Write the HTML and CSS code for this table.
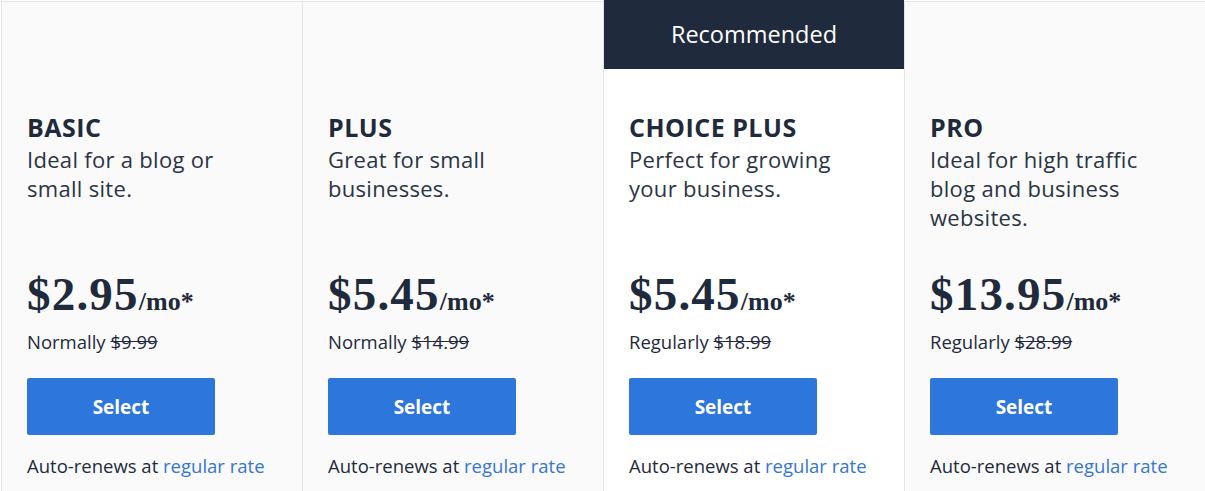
FILE: index.html
```html
<!DOCTYPE html>
<html lang="en">
<head>
<meta charset="utf-8">
<title>Plans</title>
<link rel="stylesheet" href="styles.css">
</head>
<body>
<div class="plans">
  <div class="plan">
    <div class="ribbon"></div>
    <div class="body">
      <h2 class="name">BASIC</h2>
      <p class="desc">Ideal for a blog or small site.</p>
      <div class="price"><span class="amount">$2.95</span><span class="per">/mo*</span></div>
      <p class="normal">Normally <s>$9.99</s></p>
      <a class="select" href="#">Select</a>
      <p class="renew">Auto-renews at <a href="#">regular rate</a></p>
    </div>
  </div>
  <div class="plan">
    <div class="ribbon"></div>
    <div class="body">
      <h2 class="name">PLUS</h2>
      <p class="desc">Great for small businesses.</p>
      <div class="price"><span class="amount">$5.45</span><span class="per">/mo*</span></div>
      <p class="normal">Normally <s>$14.99</s></p>
      <a class="select" href="#">Select</a>
      <p class="renew">Auto-renews at <a href="#">regular rate</a></p>
    </div>
  </div>
  <div class="plan featured">
    <div class="ribbon">Recommended</div>
    <div class="body">
      <h2 class="name">CHOICE PLUS</h2>
      <p class="desc">Perfect for growing your business.</p>
      <div class="price"><span class="amount">$5.45</span><span class="per">/mo*</span></div>
      <p class="normal">Regularly <s>$18.99</s></p>
      <a class="select" href="#">Select</a>
      <p class="renew">Auto-renews at <a href="#">regular rate</a></p>
    </div>
  </div>
  <div class="plan">
    <div class="ribbon"></div>
    <div class="body">
      <h2 class="name">PRO</h2>
      <p class="desc">Ideal for high traffic blog and business websites.</p>
      <div class="price"><span class="amount">$13.95</span><span class="per">/mo*</span></div>
      <p class="normal">Regularly <s>$28.99</s></p>
      <a class="select" href="#">Select</a>
      <p class="renew">Auto-renews at <a href="#">regular rate</a></p>
    </div>
  </div>
</div>
</body>
</html>
```
FILE: styles.css
```css
html, body {
  margin: 0;
  padding: 0;
  background: #ffffff;
}
body {
  font-family: "Open Sans", "Noto Sans", sans-serif;
  color: #1f2a3c;
  overflow: hidden;
}
.plans {
  display: flex;
  padding: 1px 0 0 1px;
  height: 490px;
}
.plan {
  width: 301px;
  flex: none;
  box-sizing: border-box;
  border-left: 1px solid #e4e4e4;
  border-top: 1px solid #e4e4e4;
  background: #fafafa;
  display: flex;
  flex-direction: column;
}
.plan:last-child {
  width: 302px;
}
.plan.featured {
  margin-top: -1px;
  border-top: none;
  background: #ffffff;
}
.ribbon {
  height: 67px;
  flex: none;
  display: flex;
  align-items: center;
  justify-content: center;
  font-size: 23.5px;
  color: #ffffff;
}
.featured .ribbon {
  height: 69px;
  background: #1f2a3c;
  padding-bottom: 2px;
  box-sizing: border-box;
}
.body {
  padding: 0 25px;
}
.name {
  margin: 42px 0 0;
  font-size: 25px;
  line-height: 32px;
  font-weight: 700;
  letter-spacing: 0.5px;
  color: #1f2a3c;
}
.desc {
  margin: 2px 0 0;
  font-size: 22px;
  line-height: 29px;
  letter-spacing: 0.3px;
  color: #2b3444;
  height: 87px;
  max-width: 240px;
}
.price {
  margin-top: 37px;
  font-family: "Liberation Serif", "Times New Roman", serif;
  font-weight: 700;
  color: #1f2a3c;
  line-height: 50px;
  white-space: nowrap;
}
.amount {
  font-size: 47px;
  letter-spacing: 1.2px;
}
.per {
  font-size: 26px;
}
.normal {
  margin: 1px 0 0;
  font-size: 18.5px;
  line-height: 22px;
  color: #1f2a3c;
}
.normal s {
  color: #1f2a3c;
}
.select {
  display: flex;
  align-items: center;
  justify-content: center;
  margin-top: 25px;
  width: 188px;
  height: 57px;
  background: #2d76db;
  color: #ffffff;
  border-radius: 2px;
  font-size: 19px;
  font-weight: 700;
  text-decoration: none;
}
.renew {
  margin: 19px 0 0;
  font-size: 18.5px;
  line-height: 24px;
  color: #1f2a3c;
}
.renew a {
  color: #3575d3;
  text-decoration: none;
}
```
